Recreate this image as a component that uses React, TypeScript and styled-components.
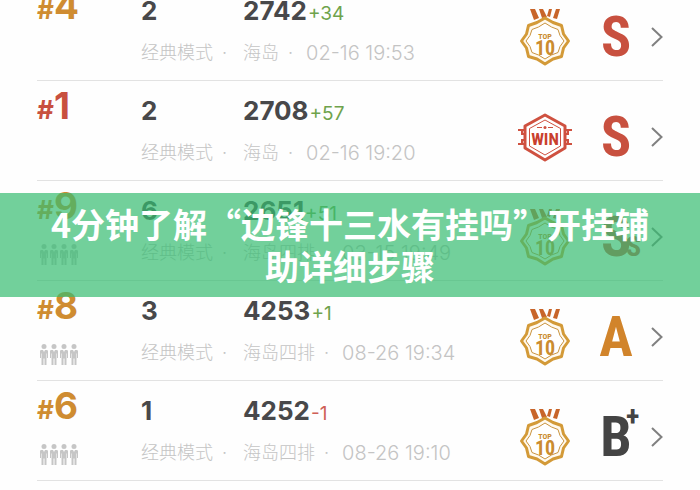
import React from "react";
import styled, { createGlobalStyle } from "styled-components";

const narrow = "'Roboto Condensed', 'Liberation Sans', sans-serif"

const GlobalStyle = createGlobalStyle`
  body {
    margin: 0;
    background: #fefefe;
    font-family: Inter, 'Noto Sans CJK SC', sans-serif;
    overflow: hidden;
  }
`
const Page = styled.main`
  position: relative;
  overflow: hidden;
  height: 100vh;
`
const List = styled.ul`
  list-style: none;
  margin: -19px 37px 0;
  padding: 0;
`
const Row = styled.a`
  display: grid;
  grid-template-columns: 104px 102px 1fr 56px 78px 12px;
  align-items: center;
  min-height: 99px;
  border-bottom: 1px solid #e2e2e2;
  color: #48484a;
  text-decoration: none;
`
const Cell = styled.div`
  display: flex;
  flex-direction: column;
  gap: 12px;
  white-space: nowrap;
`
const RankCell = styled(Cell)`
  align-self: start;
  padding-top: 6px;
`
const Rank = styled.div<{ $color: string }>`
  font-size: 26px;
  font-weight: 700;
  line-height: 44px;
  color: ${(p) => p.$color};
`
const RankNumber = styled.span`
  font-size: 37px;
  line-height: 1;
`
const Value = styled.div`
  font-size: 26px;
  font-weight: 700;
  line-height: 32px;
`
const Delta = styled.span<{ $down: boolean }>`
  margin-left: 1px;
  font-size: 19px;
  font-weight: 400;
  line-height: 1;
  color: ${(p) => (p.$down ? '#cf5f57' : '#6fa34c')};
`
const Info = styled.div`
  display: flex;
  gap: 9px;
  font-size: 18px;
  font-weight: 300;
  line-height: 28px;
  color: #c4c4c4;
`
const Date = styled.time`
  margin-left: 4px;
  font-size: 20px;
`
const Marks = styled.div`
  display: grid;
  grid-template-columns: subgrid;
  grid-column: span 3;
  align-items: center;
  padding-top: 12px;
`
const Rating = styled.div<{ $color: string }>`
  display: flex;
  justify-content: center;
  position: relative;
  padding-left: 8px;
  font-family: ${narrow};
  font-size: 56px;
  font-weight: 700;
  line-height: 56px;
  color: ${(p) => p.$color};
`
const Mark = styled.span<{ $low: boolean }>`
  position: absolute;
  left: 53px;
  top: ${(p) => (p.$low ? '10px' : '-20px')};
  font-size: 28px;
`
const Banner = styled.div`
  position: absolute;
  left: 0;
  right: 0;
  top: 50%;
  transform: translateY(-50%);
  padding: 10px 50px;
  background: rgba(54, 188, 113, 0.7);
`
const Title = styled.h1`
  margin: 0;
  font-family: 'Noto Sans CJK SC', sans-serif;
  font-size: 34px;
  font-weight: 700;
  line-height: 42px;
  text-align: center;
  color: #fff;
`

const Person: React.FC<{ x: number }> = ({ x }) => (
  <g transform={`translate(${x} 0)`}>
    <circle cx="4" cy="2.600" r="2.500" />
    <path d="M1.300 6H3L4 8L5 6H6.700Q8 6 8 7.300V14H7V9.500H6.500V21H4.500V14.500H3.500V21H1.500V9.500H1V14H0V7.300Q0 6 1.300 6z" />
  </g>
)

const Squad = () => (
  <svg width="42" height="21" fill="#c6c6c6" aria-hidden="true">
    <Person x={3} />
    <Person x={13} />
    <Person x={23} />
    <Person x={33} />
  </svg>
)

const TopBadge = () => (
  <svg width="56" height="60" viewBox="0 0 56 60">
    <path
      d="M13 2h5l4 9-5 2zM22 2h4l4 8-5 1zM35 2h-3l-2 7 3 1zM43 2h-4l-3 9 4 1z"
      fill="#c8652a"
    />
    <path
      d="M28 11L36 15.500L44.500 18.500L46.500 27L51.500 34L46.500 41L44.500 49.500L36 52L28 57L20 52L11.500 49.500L9.500 41L4.500 34L9.500 27L11.500 18.500L20 15.500z"
      fill="#fffaf0"
      stroke="#d39a38"
      strokeWidth="3"
      strokeLinejoin="round"
    />
    <path
      d="M28 16L34.500 20L41 22.500L43 28.500L47 34L43 39.500L41 45.500L34.500 48L28 52L21.500 48L15 45.500L13 39.500L9 34L13 28.500L15 22.500L21.500 20z"
      fill="#fff"
      stroke="#c9933f"
    />
    <g fill="#cb8c2f" textAnchor="middle" fontFamily={narrow} fontWeight="700">
      <text x="28" y="32" fontSize="8">TOP</text>
      <text x="28" y="48" fontSize="20">10</text>
    </g>
  </svg>
)

const WinBadge = () => (
  <svg width="56" height="60" viewBox="0 0 56 60">
    <path d="M9 23H1M5 23V27H9M9 37H1M5 37V33H9M47 23h8M51 23V27H47M47 37h8M51 37V33H47" fill="none" stroke="#cf5140" strokeWidth="2" />
    <path d="M28 8L48 19V41L28 53L8 41V19z" fill="#fff" stroke="#cf5140" strokeWidth="3" strokeLinejoin="round" />
    <path d="M28 13L43.500 21.500V39L28 48L12.500 39V21.500z" fill="none" stroke="#cf5140" />
    <path d="M20 20.500h5M31 20.500h5" stroke="#cf5140" />
    <circle cx="28" cy="20.500" r="1.500" fill="#cf5140" />
    <text
      x="28"
      y="38"
      fontSize="17"
      fontWeight="700"
      fontFamily={narrow}
      textAnchor="middle"
      fill="#c9402e"
    >
      WIN
    </text>
  </svg>
)

const Chevron = () => (
  <svg width="12" height="20" fill="none" stroke="#808080" strokeWidth="2" aria-hidden="true">
    <path d="M1 1L10.500 10L1 19" />
  </svg>
)

const GOLD = '#cf8c31'
const RED = '#c8503f'

const matches = [
  { rank: 4, place: 2, score: 2742, delta: '+34', map: '海岛', date: '02-16 19:53', rating: 'S', color: RED },
  { rank: 1, place: 2, score: 2708, delta: '+57', map: '海岛', date: '02-16 19:20', rating: 'S', color: RED },
  { rank: 9, place: 6, score: 2651, delta: '+51', map: '海岛四排', date: '03-15 19:49', rating: 'S', mark: 'S', color: RED },
  { rank: 8, place: 3, score: 4253, delta: '+1', map: '海岛四排', date: '08-26 19:34', rating: 'A', color: '#d1842b' },
  { rank: 6, place: 1, score: 4252, delta: '-1', map: '海岛四排', date: '08-26 19:10', rating: 'B', mark: '+', color: '#444' },
]

const App: React.FC = () => {
  return (
    <Page lang="zh-CN">
      <GlobalStyle />
      <List>
        {matches.map((m) => (
          <li key={m.rank}>
            <Row href="#">
              <RankCell>
                <Rank $color={m.rank === 1 ? RED : GOLD}>
                  #<RankNumber>{m.rank}</RankNumber>
                </Rank>
                {m.map === '海岛四排' && <Squad />}
              </RankCell>
              <Cell>
                <Value>{m.place}</Value>
                <Info>
                  <span>经典模式</span>
                  <span>·</span>
                </Info>
              </Cell>
              <Cell>
                <Value>
                  {m.score}
                  <Delta $down={m.delta.startsWith('-')}>{m.delta}</Delta>
                </Value>
                <Info>
                  <span>{m.map}</span>
                  <span>·</span>
                  <Date>{m.date}</Date>
                </Info>
              </Cell>
              <Marks>
                {m.rank === 1 ? <WinBadge /> : <TopBadge />}
                <Rating $color={m.color}>
                  {m.rating}
                  {m.mark && <Mark $low={m.mark === 'S'}>{m.mark}</Mark>}
                </Rating>
                <Chevron />
              </Marks>
            </Row>
          </li>
        ))}
      </List>
      <Banner>
        <Title>4分钟了解“边锋十三水有挂吗”开挂辅助详细步骤</Title>
      </Banner>
    </Page>
  );
};

export default App;
